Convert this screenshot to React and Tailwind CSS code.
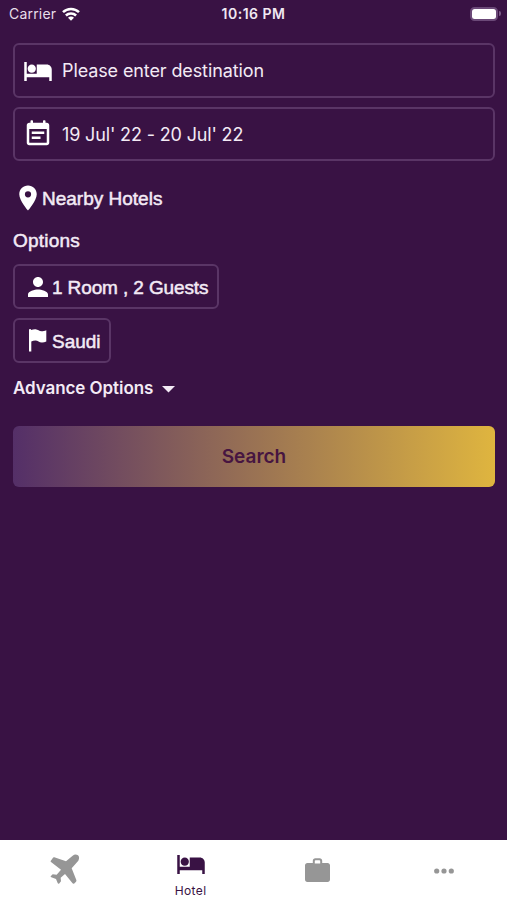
import React from 'react';

const HotelIcon = ({ className }) => (
    <svg className={className} viewBox="0 0 24 24" fill="currentColor">
        <path d="M7 13.400c1.800 0 3.300-1.500 3.300-3.300S8.800 6.800 7 6.800s-3.300 1.500-3.300 3.300 1.500 3.300 3.300 3.300zM19 6.700h-8v7.500H3V4.700H1V20h2v-3h18v3h2v-9.300c0-2.210-1.790-4-4-4z" />
    </svg>
);

const EventIcon = ({ className }) => (
    <svg className={className} viewBox="0 0 24 24" fill="currentColor">
        <path d="M19 3h-1V1.6c0-.33-.27-.6-.6-.6h-.8c-.33 0-.6.27-.6.6V3H8V1.6c0-.33-.27-.6-.6-.6h-.8c-.33 0-.6.27-.6.6V3H5c-1.11 0-2 .9-2 2v14c0 1.1.89 2 2 2h14c1.1 0 2-.9 2-2V5c0-1.1-.9-2-2-2zm0 15.5c0 .28-.22.5-.5.5h-13a.5.5 0 0 1-.5-.5V8h14v10.5zM17 10H7v2h10v-2zm-3 4H7v2h7v-2z" />
    </svg>
);

const PinIcon = ({ className }) => (
    <svg className={className} viewBox="0 0 24 24" fill="currentColor">
        <path d="M12 2C8.13 2 5 5.13 5 9c0 5.25 7 13 7 13s7-7.75 7-13c0-3.87-3.13-7-7-7zm0 9.5a2.5 2.5 0 0 1 0-5 2.5 2.5 0 0 1 0 5z" />
    </svg>
);

const PersonIcon = ({ className }) => (
    <svg className={className} viewBox="0 0 24 24" fill="currentColor">
        <path d="M12 12c2.21 0 4-1.79 4-4s-1.79-4-4-4-4 1.79-4 4 1.79 4 4 4zm0 2c-2.67 0-8 1.34-8 4v2h16v-2c0-2.66-5.33-4-8-4z" />
    </svg>
);

const FlagIcon = ({ className }) => (
    <svg className={className} viewBox="0 0 18 23" fill="currentColor">
        <path d="M0 1.200C0 .5.400 0 1.100 0c.6 0 1 .4 1.100 1C3.600.5 5 .2 6.600.3c2.400.2 3.500 1.900 6 2 1.600 0 3-.3 4.700-1.100v11.300c-1.500.7-3 1.100-4.600 1-2.500-.1-3.800-2-6.300-2.100-1.500 0-2.800.4-4.100 1V22.500H0z" />
    </svg>
);

const PlaneIcon = ({ className }) => (
    <svg className={className} viewBox="0 0 126 126" fill="currentColor">
        <path d="M20 36 27 26Q28 24 31 25L66 37 86 20Q94 14 102 19 108 25 103 35L83 58 97 93Q98 96 96 98L90 104Q87 105 85 102L63 75 50 86 51 97 45 104Q42 105 41 102L36 90 22 85Q19 84 20 82L26 76 38 77 51 62 22 40Q19 38 20 36z" />
    </svg>
);

const CaseIcon = ({ className }) => (
    <svg className={className} viewBox="0 0 25 24" fill="currentColor">
        <path fillRule="evenodd" d="M7.800 5V2.800C7.800 1.200 8.900.2 10.400.2h4.200c1.500 0 2.600 1 2.600 2.600V5h5.400C24 5 25 6 25 7.300v14.200C25 22.900 24 23.900 22.600 23.900H2.400C1 23.900 0 22.900 0 21.500V7.300C0 6 1 5 2.400 5h5.400zm2 .6h5.400V3c0-.5-.3-.8-.8-.8h-3.800c-.5 0-.8.3-.8.8v2.600z" />
    </svg>
);

const DotsIcon = ({ className }) => (
    <svg className={className} viewBox="0 0 20 6" fill="currentColor">
        <circle cx="2.700" cy="3" r="2.600" />
        <circle cx="10" cy="3" r="2.600" />
        <circle cx="17.300" cy="3" r="2.600" />
    </svg>
);

const WifiIcon = ({ className }) => (
    <svg className={className} viewBox="0 0 18 14" fill="none" stroke="currentColor" strokeWidth="2.500">
        <path d="M1 5.200a11.300 11.300 0 0 1 16 0" />
        <path d="M3.900 8.500a7.200 7.200 0 0 1 10.200 0" />
        <path d="M9 13.800 6 10.800a4.200 4.200 0 0 1 6 0z" fill="currentColor" stroke="none" />
    </svg>
);

const StatusBar = () => (
    <div className="relative flex h-[27px] items-center justify-between pl-[9px] pr-[6px] text-white">
        <div className="flex items-center">
            <span className="text-[14px] tracking-[0.200px] text-[#e8dfea]">Carrier</span>
            <WifiIcon className="ml-[6px] h-[14px] w-[18px]" />
        </div>
        <span className="absolute left-1/2 -translate-x-1/2 whitespace-nowrap text-[14px] font-semibold tracking-[0.500px] text-[#f0e8f2]">10:16 PM</span>
        <div className="flex items-center gap-px">
            <div className="h-[14px] w-[28px] rounded-[4.500px] border-2 border-[#6b4978]">
                <div className="h-full w-full rounded-[2.500px] bg-white" />
            </div>
            <div className="h-[5px] w-[2px] rounded-r-full bg-[#7c5c88]" />
        </div>
    </div>
);

const App = () => {
    return (
        <div className="flex h-screen flex-col bg-[#391244] font-['Inter',sans-serif] text-[#f3eaf5]">
            <StatusBar />

            <main className="flex flex-1 flex-col items-start pl-[13px] pr-[12px] pt-[16px]">
                {/* Search fields */}
                <div className="flex h-[55px] w-full items-center rounded-[6px] border-2 border-[#5a3566] pl-[8px]">
                    <HotelIcon className="h-[30px] w-[30px] text-white" />
                    <span className="ml-[9px] text-[18px] tracking-[-0.110px]">Please enter destination</span>
                </div>
                <div className="mt-[9px] flex h-[54px] w-full items-center rounded-[6px] border-2 border-[#5a3566] pl-[8px]">
                    <EventIcon className="h-[30px] w-[30px] text-white" />
                    <span className="ml-[9px] text-[18px] tracking-[-0.150px]">19 Jul' 22 - 20 Jul' 22</span>
                </div>

                <div className="mt-[22px] flex h-[30px] items-center">
                    <PinIcon className="h-[30px] w-[30px] text-white" />
                    <span className="-ml-px pt-[2px] font-['Liberation_Sans',sans-serif] text-[19px] [-webkit-text-stroke:0.500px]">Nearby Hotels</span>
                </div>

                {/* Options */}
                <h2 className="mt-[14px] h-[28px] font-['Liberation_Sans',sans-serif] text-[19px] leading-[28px] tracking-[0.200px] [-webkit-text-stroke:0.500px]">Options</h2>
                <div className="mt-[9px] flex h-[45px] w-[206px] items-center rounded-[6px] border-2 border-[#5a3566] pl-[8px]">
                    <PersonIcon className="h-[30px] w-[30px] text-white" />
                    <span className="-ml-px whitespace-nowrap pt-[3px] font-['Liberation_Sans',sans-serif] text-[19px] tracking-[-0.120px] [-webkit-text-stroke:0.500px]">1 Room , 2 Guests</span>
                </div>
                <div className="mt-[9px] flex h-[45px] w-[98px] items-center rounded-[6px] border-2 border-[#5a3566] pl-[14px]">
                    <FlagIcon className="h-[23px] w-[18px] text-white" />
                    <span className="ml-[5px] pt-[3px] font-['Liberation_Sans',sans-serif] text-[19px] [-webkit-text-stroke:0.500px]">Saudi</span>
                </div>
                <div className="mt-[12px] flex h-[28px] items-center">
                    <span className="text-[17px] font-semibold tracking-[-0.070px]">Advance Options</span>
                    <svg className="ml-[9px] h-[7px] w-[13px]" viewBox="0 0 13 7" fill="currentColor">
                        <path d="M0 0h13L6.500 6.500z" />
                    </svg>
                </div>

                <button className="mt-[23px] h-[61px] w-full rounded-[6px] bg-linear-to-r/srgb from-[#542f68] to-[#dfb53f] pt-[2px] text-[19px] font-semibold text-[#471541]">
                    Search
                </button>
            </main>

            {/* Bottom tabs */}
            <nav className="grid h-[60px] grid-cols-4 bg-white text-[#969696]">
                <div className="flex items-center justify-center pl-[4px]">
                    <PlaneIcon className="h-[42px] w-[42px]" />
                </div>
                <div className="flex flex-col items-center pl-px pt-[9px] text-[#391244]">
                    <HotelIcon className="h-[30px] w-[30px]" />
                    <span className="mt-[3px] text-[12px] leading-[18px] tracking-[0.400px]">Hotel</span>
                </div>
                <div className="flex items-center justify-center pl-px">
                    <CaseIcon className="h-[24px] w-[25px]" />
                </div>
                <div className="flex items-center justify-center pt-px">
                    <DotsIcon className="h-[6px] w-[20px]" />
                </div>
            </nav>
        </div>
    );
};

export default App;
